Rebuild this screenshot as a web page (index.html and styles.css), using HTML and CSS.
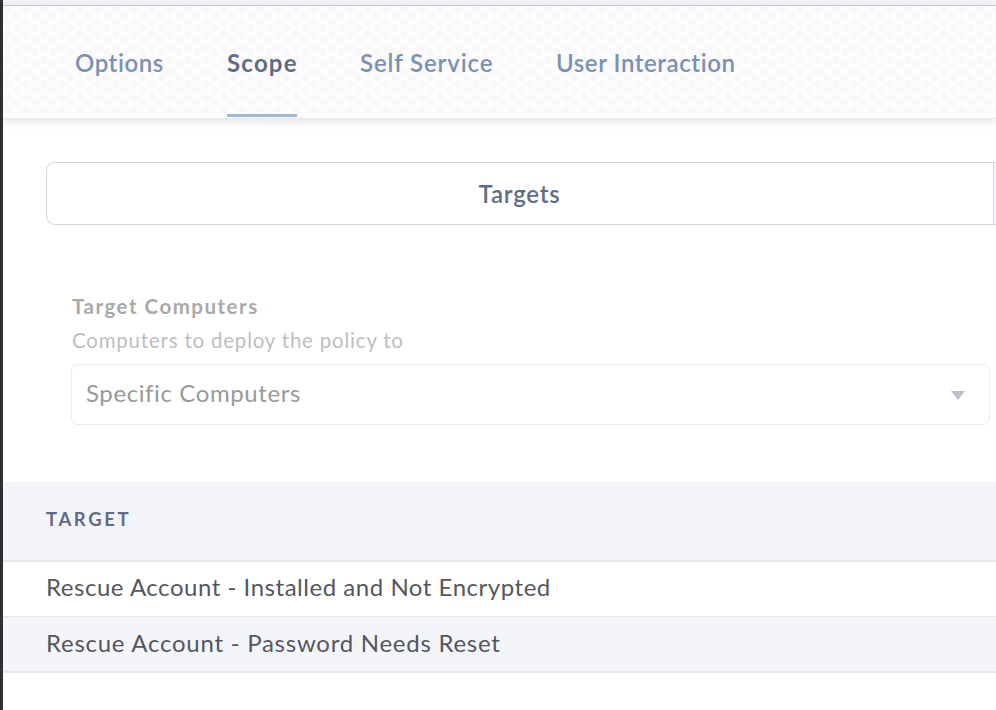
FILE: index.html
```html
<!DOCTYPE html>
<html lang="en">
<head>
<meta charset="utf-8">
<title>Policy Scope</title>
<link rel="stylesheet" href="styles.css">
</head>
<body>
<main class="page">
  <div class="strip"></div>
  <nav class="tabs">
    <a class="tab tab-options">Options</a>
    <a class="tab tab-active">Scope</a>
    <a class="tab tab-service">Self Service</a>
    <a class="tab tab-user">User Interaction</a>
  </nav>
  <div class="segments">
    <div class="segment"><span>Targets</span></div>
    <div class="segment-next"></div>
  </div>
  <section class="field">
    <div class="label"><span>Target Computers</span></div>
    <div class="hint"><span>Computers to deploy the policy to</span></div>
    <div class="select">
      <span class="value">Specific Computers</span>
      <svg class="caret" viewBox="0 0 14 9" width="14" height="9"><path d="M0 0H14L7 9Z" fill="#bcc2cc"/></svg>
    </div>
  </section>
  <div class="table">
    <div class="thead"><span>TARGET</span></div>
    <div class="row"><span class="installed">Rescue Account - Installed and Not Encrypted</span></div>
    <div class="row row-alt"><span class="reset">Rescue Account - Password Needs Reset</span></div>
  </div>
</main>
</body>
</html>
```
FILE: styles.css
```css
* { box-sizing: border-box; }
body {
  margin: 0;
  height: 710px;
  overflow: hidden;
  background: #fff;
  font-family: Lato, "Liberation Sans", sans-serif;
  font-size: 24px;
  white-space: nowrap;
}
.page {
  height: 710px;
  border-left: 3px solid #303030;
}
.strip { height: 5px; background: #f4f5fa; }
.tabs {
  display: flex;
  align-items: stretch;
  height: 114px;
  padding: 0 0 1px 72px;
  border-top: 1px solid #c8c9d5;
  border-bottom: 1px solid #e6e7ec;
  background:
    linear-gradient(#fff, #fff) 0 100% / 100% 4px no-repeat,
    radial-gradient(circle at 5px 5px, #f9f9f9 0, #f7f7f7 2.5px, transparent 4.8px) 0 -1px / 18px 12.5px,
    radial-gradient(circle at 14px 5px, #f9f9f9 0, #f7f7f7 2.5px, transparent 4.8px) 0 4px / 18px 12.5px,
    #fcfcfc;
  box-shadow: 0 2px 9px rgba(40, 45, 60, .15);
}
.tab {
  padding-top: 42px;
  line-height: 30px;
  font-weight: 600;
  color: #7b90b3;
  border-bottom: 3px solid transparent;
}
.tab-options { width: 88px; margin-right: 64px; letter-spacing: .55px; }
.tab-active { width: 70px; margin-right: 63px; font-weight: 700; letter-spacing: 1.2px; color: #5f6c87; border-color: #a0b6d5; }
.tab-service { width: 132px; margin-right: 64px; letter-spacing: .88px; }
.tab-user { width: 180px; letter-spacing: .57px; }
.segments {
  display: flex;
  height: 63px;
  margin: 43px 0 0 43px;
  border: 1px solid #d4d5dd;
  border-right: 0;
  border-radius: 9px 0 0 9px;
}
.segment {
  width: 947px;
  padding-right: 1px;
  border-right: 1px solid #d4d5dd;
  line-height: 61px;
  text-align: center;
  font-weight: 600;
  letter-spacing: .75px;
  color: #5f6d87;
}
.segment-next { flex: 1; background: #f8f8fc; }
.field { margin: 67px 6px 0 68px; }
.label { height: 32px; line-height: 29px; padding-left: 1px; font-size: 20.5px; font-weight: 700; letter-spacing: 1.5px; color: #a9a9a9; }
.hint { height: 40px; line-height: 33px; padding-left: 1px; font-size: 20.5px; letter-spacing: .79px; color: #bdbec2; }
.select {
  display: flex;
  align-items: center;
  justify-content: space-between;
  height: 61px;
  padding: 0 24px 0 14px;
  border: 1px solid #ebebed;
  border-radius: 7px;
  color: #999;
}
.value { letter-spacing: .6px; padding-bottom: 4px; }
.caret { margin-top: 1px; }
.table { margin-top: 57px; }
.thead {
  height: 80px;
  line-height: 75px;
  background: #f4f5f9;
  border-bottom: 2px solid #e6e7ed;
  padding-left: 43px;
  font-size: 18.5px;
  font-weight: 700;
  letter-spacing: 2.6px;
  color: #5f6c87;
}
.row {
  height: 55px;
  line-height: 50px;
  padding-left: 43px;
  color: #55575e;
  border-bottom: 1px solid #e6e7ed;
}
.row-alt { height: 56px; line-height: 52px; background: #f4f5f9; border-bottom-width: 2px; }
.installed { letter-spacing: .53px; }
.reset { letter-spacing: .74px; }
```
